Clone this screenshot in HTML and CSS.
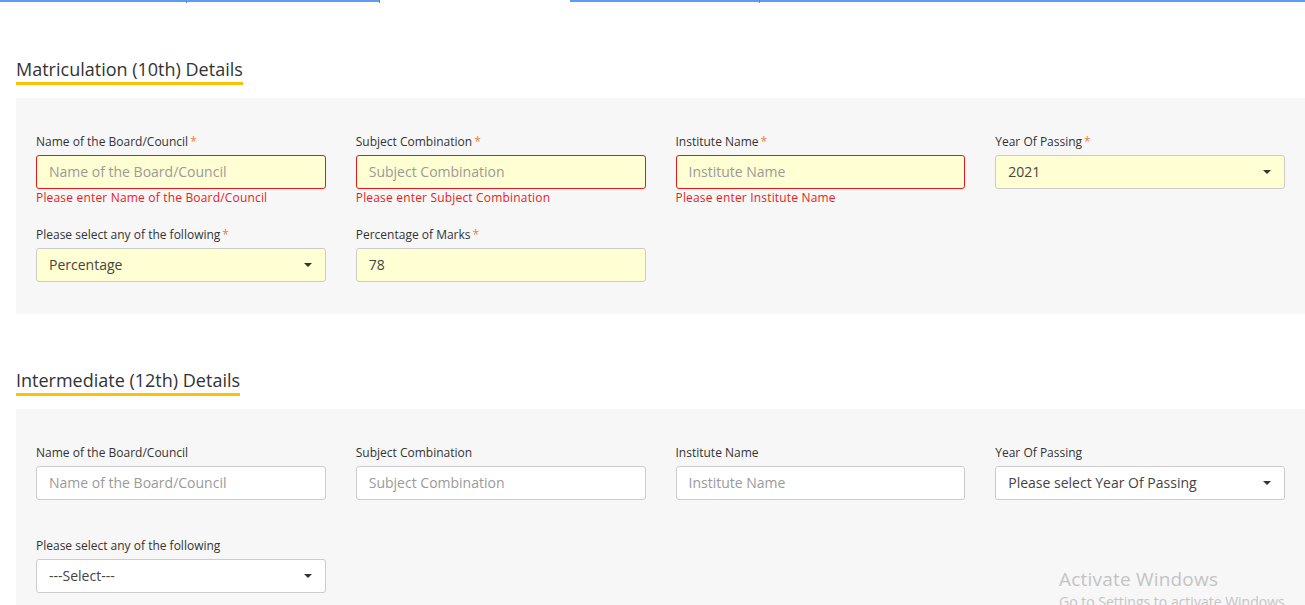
FILE: index.html
```html
<!DOCTYPE html>
<html>
<head>
<meta charset="utf-8">
<link rel="stylesheet" href="styles.css">
</head>
<body>
<div class="tabs">
  <div class="tab t1"></div>
  <div class="tab t2"></div>
  <div class="tab active"></div>
  <div class="tab t4"></div>
  <div class="tab t5"></div>
</div>

<div class="content">
  <section class="section">
    <h2 class="section-title">Matriculation (10th) Details</h2>
    <div class="panel">
      <div class="field">
        <label class="label">Name of the Board/Council<span class="req">*</span></label>
        <div class="input error"><span class="ph">Name of the Board/Council</span></div>
        <div class="err">Please enter Name of the Board/Council</div>
      </div>
      <div class="field">
        <label class="label">Subject Combination<span class="req">*</span></label>
        <div class="input error"><span class="ph">Subject Combination</span></div>
        <div class="err">Please enter Subject Combination</div>
      </div>
      <div class="field">
        <label class="label">Institute Name<span class="req">*</span></label>
        <div class="input error"><span class="ph">Institute Name</span></div>
        <div class="err">Please enter Institute Name</div>
      </div>
      <div class="field">
        <label class="label">Year Of Passing<span class="req">*</span></label>
        <div class="input filled select"><span class="val">2021</span><span class="caret"></span></div>
        <div class="err"></div>
      </div>
      <div class="field">
        <label class="label">Please select any of the following<span class="req">*</span></label>
        <div class="input filled select"><span class="val">Percentage</span><span class="caret"></span></div>
        <div class="err"></div>
      </div>
      <div class="field">
        <label class="label">Percentage of Marks<span class="req">*</span></label>
        <div class="input filled"><span class="val">78</span></div>
        <div class="err"></div>
      </div>
    </div>
  </section>

  <section class="section">
    <h2 class="section-title">Intermediate (12th) Details</h2>
    <div class="panel">
      <div class="field">
        <label class="label">Name of the Board/Council</label>
        <div class="input"><span class="ph">Name of the Board/Council</span></div>
        <div class="err"></div>
      </div>
      <div class="field">
        <label class="label">Subject Combination</label>
        <div class="input"><span class="ph">Subject Combination</span></div>
        <div class="err"></div>
      </div>
      <div class="field">
        <label class="label">Institute Name</label>
        <div class="input"><span class="ph">Institute Name</span></div>
        <div class="err"></div>
      </div>
      <div class="field">
        <label class="label">Year Of Passing</label>
        <div class="input select"><span class="val">Please select Year Of Passing</span><span class="caret"></span></div>
        <div class="err"></div>
      </div>
      <div class="field">
        <label class="label">Please select any of the following</label>
        <div class="input select"><span class="val">---Select---</span><span class="caret"></span></div>
        <div class="err"></div>
      </div>
    </div>
  </section>
</div>

<div class="watermark">
  <div class="wm-title">Activate Windows</div>
  <div class="wm-sub">Go to Settings to activate Windows.</div>
</div>
</body>
</html>
```

FILE: styles.css
```css
html, body {
  margin: 0;
  padding: 0;
  background: #ffffff;
  font-family: "Open Sans", "Noto Sans", sans-serif;
  color: #333333;
  overflow: hidden;
}

.tabs {
  display: flex;
  height: 3px;
}

.tab {
  position: relative;
  height: 0;
  border-bottom: 2px solid #5e9cf2;
}

.tab::after {
  content: "";
  position: absolute;
  right: 0;
  top: 0;
  width: 1px;
  height: 3px;
  background: #4a8cf0;
}

.t1 { width: 187px; }
.t2 { width: 193px; }
.active { width: 190px; border-bottom-color: transparent; }
.active::after { display: none; }
.t4 { width: 190px; }
.t5 { flex: 1; }
.t5::after { display: none; }

.content {
  padding: 0 0 0 16px;
}

.section {
  margin-top: 55px;
}

.section-title {
  display: inline-block;
  margin: 0 0 13px 0;
  font-size: 18px;
  font-weight: 400;
  line-height: 23px;
  padding-bottom: 1px;
  color: #333333;
  border-bottom: 3px solid #fcc102;
}

.panel {
  background: #f7f7f7;
  padding: 35px 20px 15px 20px;
  display: grid;
  grid-template-columns: repeat(4, 1fr);
  column-gap: 30px;
  row-gap: 20px;
}

.field {
  display: flex;
  flex-direction: column;
}

.label {
  font-size: 12px;
  line-height: 17px;
  height: 17px;
  color: #333333;
  margin-bottom: 5px;
  white-space: nowrap;
}

.req {
  color: #f47b3a;
  margin-left: 2px;
}

.input {
  height: 34px;
  box-sizing: border-box;
  border: 1px solid #cccccc;
  border-radius: 3px;
  background: #ffffff;
  padding: 0 12px 2px 12px;
  display: flex;
  align-items: center;
  font-size: 14px;
  position: relative;
}

.input.error {
  border-color: #e8171b;
  background: #ffffd3;
}

.input.filled {
  background: #ffffd3;
}

.ph {
  color: #9a9a9a;
}

.val {
  color: #444444;
}

.select {
  justify-content: space-between;
}

.caret {
  width: 0;
  height: 0;
  border-left: 4px solid transparent;
  border-right: 4px solid transparent;
  border-top: 4px solid #333333;
  margin-right: 1px;
  margin-top: 2px;
}

.err {
  height: 17px;
  font-size: 12px;
  line-height: 17px;
  letter-spacing: 0.18px;
  color: #ea1c1c;
  white-space: nowrap;
}

.watermark {
  position: absolute;
  left: 1059px;
  top: 566px;
  color: #c4c4c4;
  font-family: "Open Sans", "Noto Sans", sans-serif;
  white-space: nowrap;
}

.wm-title {
  font-size: 19px;
  line-height: 27px;
  letter-spacing: 0.2px;
}

.wm-sub {
  font-size: 14px;
  line-height: 18px;
}
```
